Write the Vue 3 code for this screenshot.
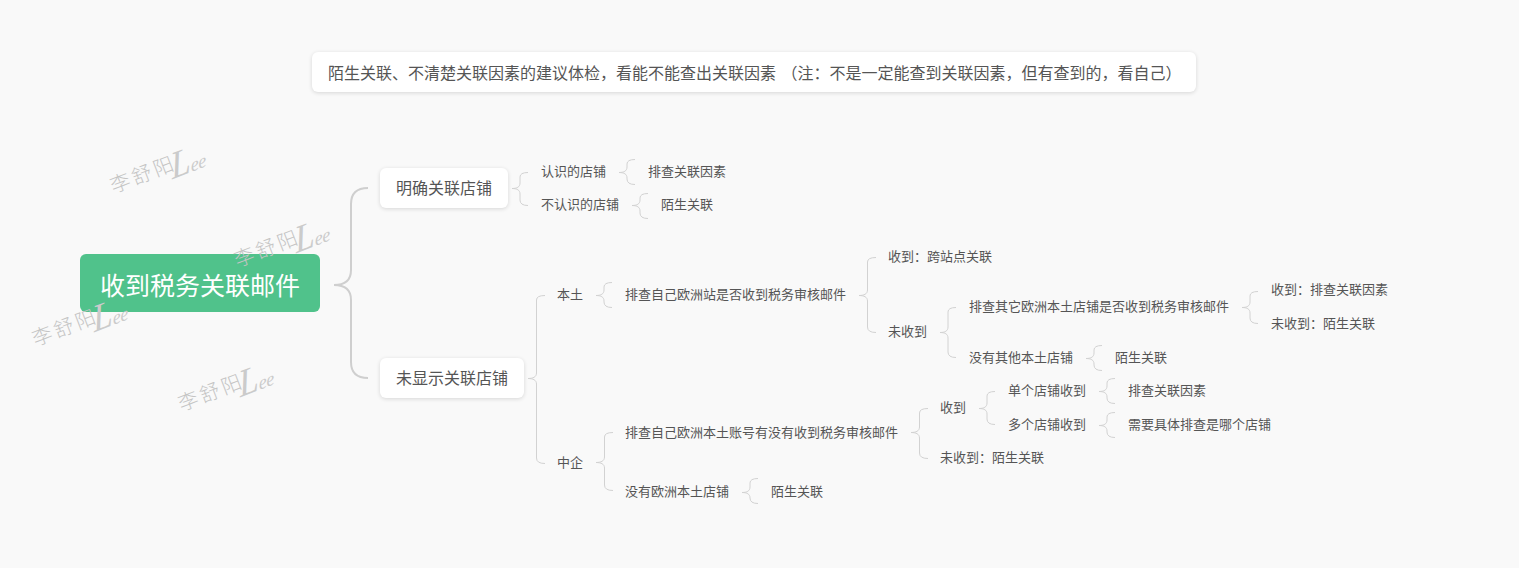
<script setup>
const notes = [
  { text: '认识的店铺', x: 541, y: 172 },
  { text: '排查关联因素', x: 648, y: 172 },
  { text: '不认识的店铺', x: 541, y: 205 },
  { text: '陌生关联', x: 661, y: 205 },
  { text: '本土', x: 557, y: 295 },
  { text: '排查自己欧洲站是否收到税务审核邮件', x: 625, y: 295 },
  { text: '收到：跨站点关联', x: 888, y: 257 },
  { text: '未收到', x: 888, y: 332 },
  { text: '排查其它欧洲本土店铺是否收到税务审核邮件', x: 969, y: 307 },
  { text: '收到：排查关联因素', x: 1271, y: 290 },
  { text: '未收到：陌生关联', x: 1271, y: 324 },
  { text: '没有其他本土店铺', x: 969, y: 358 },
  { text: '陌生关联', x: 1115, y: 358 },
  { text: '中企', x: 557, y: 463 },
  { text: '排查自己欧洲本土账号有没有收到税务审核邮件', x: 625, y: 433 },
  { text: '收到', x: 940, y: 408 },
  { text: '单个店铺收到', x: 1008, y: 391 },
  { text: '排查关联因素', x: 1128, y: 391 },
  { text: '多个店铺收到', x: 1008, y: 425 },
  { text: '需要具体排查是哪个店铺', x: 1128, y: 425 },
  { text: '未收到：陌生关联', x: 940, y: 458 },
  { text: '没有欧洲本土店铺', x: 625, y: 492 },
  { text: '陌生关联', x: 771, y: 492 }
]

const branches = [
  { text: '明确关联店铺', x: 380, y: 168, w: 128 },
  { text: '未显示关联店铺', x: 380, y: 358, w: 144 }
]

// tip x, tip y, top arm y, bottom arm y, total width
const braces = [
  [512, 188, 172, 205, 16],
  [619, 172, 159, 184, 16],
  [632, 205, 193, 218, 16],
  [528, 378, 295, 463, 17],
  [596, 295, 282, 307, 16],
  [859, 295, 257, 332, 17],
  [940, 332, 307, 357, 16],
  [1242, 307, 291, 323, 16],
  [1086, 358, 345, 370, 16],
  [596, 462, 432, 490, 17],
  [911, 432, 408, 458, 17],
  [979, 408, 391, 424, 16],
  [1099, 391, 378, 403, 16],
  [1099, 425, 412, 437, 16],
  [742, 492, 478, 503, 16]
]

function bracePath([x, y, top, bottom, w]) {
  const mid = x + w / 2
  const end = x + w
  const r = 5
  return [
    `M${x} ${y + 0.5}`,
    `C${x + 5} ${y + 0.5} ${mid} ${y - 1} ${mid} ${y - r}`,
    `L${mid} ${top + r}`,
    `Q${mid} ${top + 0.5} ${end} ${top + 0.5}`,
    `M${x} ${y + 0.5}`,
    `C${x + 5} ${y + 0.5} ${mid} ${y + 2} ${mid} ${y + r + 1}`,
    `L${mid} ${bottom - r}`,
    `Q${mid} ${bottom + 0.5} ${end} ${bottom + 0.5}`
  ].join(' ')
}

const rootBrace =
  'M334 285 C344 285 351 281 351 270 L351 204 Q351 188 368 188 M334 285 C344 285 351 289 351 300 L351 362 Q351 378 368 378'

const marks = [
  { x: 107, y: 149 },
  { x: 231, y: 223 },
  { x: 29, y: 302 },
  { x: 175, y: 367 }
]

const pos = (x, y) => ({ left: `${x}px`, top: `${y}px` })
</script>

<template>
  <div class="canvas" lang="zh-CN">
    <svg class="links" width="1519" height="568" viewBox="0 0 1519 568" fill="none">
      <path class="thick" :d="rootBrace" />
      <path v-for="(b, i) in braces" :key="i" class="thin" :d="bracePath(b)" />
    </svg>

    <div class="summary">陌生关联、不清楚关联因素的建议体检，看能不能查出关联因素 （注：不是一定能查到关联因素，但有查到的，看自己）</div>

    <div class="root">收到税务关联邮件</div>

    <div
      v-for="b in branches"
      :key="b.text"
      class="branch"
      :style="{ ...pos(b.x, b.y), width: b.w + 'px' }"
    >{{ b.text }}</div>

    <div
      v-for="(n, i) in notes"
      :key="i"
      class="leaf"
      :style="pos(n.x, n.y)"
    >{{ n.text }}</div>

    <div v-for="(m, i) in marks" :key="'m' + i" class="mark" :style="pos(m.x, m.y)">
      <span class="mark-cn">李舒阳</span><span class="mark-en"><span class="mark-cap">L</span><span class="mark-low">ee</span></span>
    </div>
  </div>
</template>

<style>
html, body { margin: 0; background: #f9f9f9; }
</style>

<style scoped>
.canvas {
  position: relative;
  width: 1519px;
  height: 568px;
  overflow: hidden;
  background: #f9f9f9;
  font-family: "Noto Sans CJK SC", "Noto Sans", sans-serif;
  color: #555;
}
.links { position: absolute; left: 0; top: 0; }
.thick { stroke: #cfcfcf; stroke-width: 2; }
.thin { stroke: #d2d2d2; stroke-width: 1; }

.summary {
  position: absolute;
  left: 312px;
  top: 52px;
  width: 884px;
  height: 40px;
  box-sizing: border-box;
  padding-left: 16px;
  font-size: 16px;
  line-height: 40px;
  word-spacing: 2px;
  white-space: pre;
  background: #fff;
  border-radius: 6px;
  box-shadow: 0 1px 4px rgba(0, 0, 0, 0.14);
}
.root {
  position: absolute;
  left: 80px;
  top: 254px;
  width: 240px;
  height: 58px;
  font-size: 25px;
  line-height: 60px;
  text-align: center;
  color: #fff;
  background: #50c28b;
  border-radius: 6px;
}
.branch {
  position: absolute;
  height: 40px;
  font-size: 16px;
  line-height: 39px;
  text-align: center;
  background: #fff;
  border-radius: 6px;
  box-shadow: 0 1px 4px rgba(0, 0, 0, 0.14);
}
.leaf {
  position: absolute;
  margin-top: -1px;
  font-size: 13px;
  line-height: 20px;
  white-space: nowrap;
  transform: translateY(-50%);
}
.mark {
  position: absolute;
  width: 100px;
  height: 36px;
  display: flex;
  align-items: center;
  white-space: nowrap;
  color: #c4c4c4;
  transform: rotate(-21deg);
  pointer-events: none;
}
.mark-cn {
  font-size: 20px;
  letter-spacing: 3px;
  font-family: "Noto Sans CJK SC", sans-serif;
  font-weight: 300;
}
.mark-en {
  display: inline-block;
  margin-left: -6px;
  font-style: italic;
  font-family: "Liberation Serif", serif;
  color: #cbcbcb;
  transform: translateY(4px) skewX(-14deg);
}
.mark-cap { font-size: 37px; }
.mark-low { font-size: 19px; letter-spacing: -0.5px; }
</style>
